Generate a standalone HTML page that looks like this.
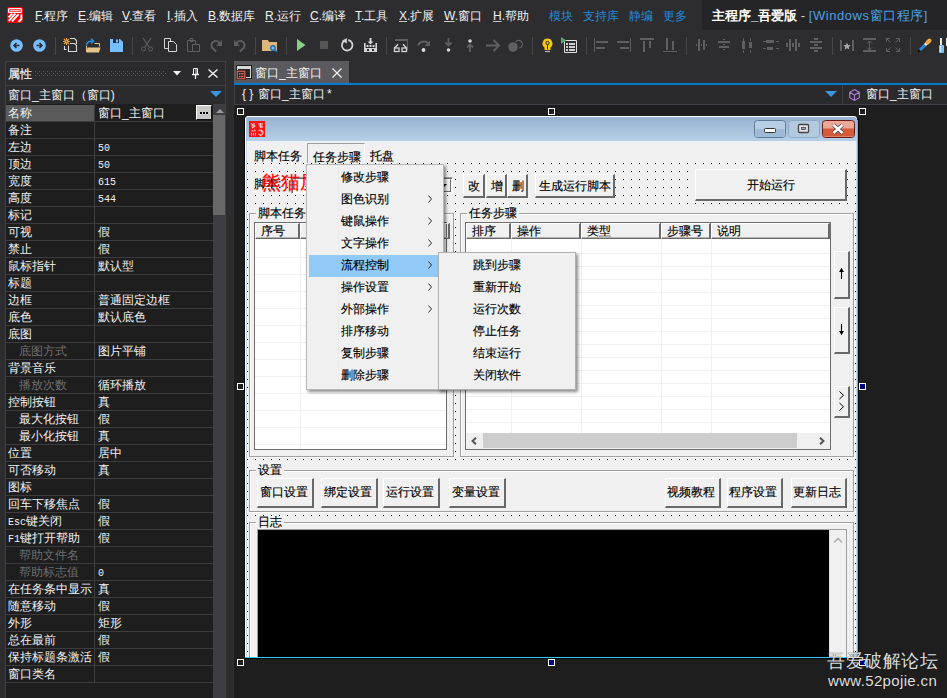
<!DOCTYPE html><html><head><meta charset="utf-8"><style>
*{box-sizing:border-box;margin:0;padding:0}
html,body{width:947px;height:698px;overflow:hidden;background:#2d2d30;font-family:"Liberation Sans",sans-serif;font-size:12px;color:#f1f1f1}
div{position:absolute;white-space:nowrap}
svg{position:absolute;overflow:visible}
.m{font-size:12px;line-height:18px;color:#f1f1f1}
.m u{text-decoration:underline;text-decoration-thickness:1px;text-underline-offset:1px;text-decoration-color:#c8c8c8}
.bl{color:#2489d8}
.pl{color:#f1f1f1;line-height:17px;font-size:12px}
.dis{color:#6d6d6d}
.mo{font-family:"Liberation Mono",monospace;font-size:10px}
.k{color:#000;font-size:12px;line-height:16px;-webkit-text-stroke:0.15px #000}
.btn{background:#f0f0f0;border-style:solid;border-width:1px 2px 2px 1px;border-color:#fff #696969 #696969 #fff;color:#000;text-align:center;font-size:12px}
.hdl{width:8px;height:8px;border:1px solid #fff;background:#1e1e1e}
</style></head><body><div style="left:0px;top:0px;width:947px;height:60px;background:#2d2d30"></div>
<svg style="left:7px;top:7px" width="16" height="16" viewBox="0 0 16 16"><rect width="16" height="16" rx="2" fill="#f00a0a"/><rect x="1.6" y="1.6" width="12.8" height="3.8" rx="1" fill="none" stroke="#fff" stroke-width="1.3"/><path d="M3.2 3.6h9.6" stroke="#fff" stroke-width=".9"/><path d="M5.2 6.6L1.6 10.4M8.4 6.6L1.8 13.8M11.6 7.2L5 14.4M14.4 7.6v4.4l-2.8 2.8" stroke="#fff" stroke-width="1.9" fill="none"/></svg>
<div class="m" style="left:35px;top:7px;"><u>F</u>.程序</div>
<div class="m" style="left:78px;top:7px;"><u>E</u>.编辑</div>
<div class="m" style="left:122px;top:7px;"><u>V</u>.查看</div>
<div class="m" style="left:167px;top:7px;"><u>I</u>.插入</div>
<div class="m" style="left:208px;top:7px;"><u>B</u>.数据库</div>
<div class="m" style="left:265px;top:7px;"><u>R</u>.运行</div>
<div class="m" style="left:310px;top:7px;"><u>C</u>.编译</div>
<div class="m" style="left:355px;top:7px;"><u>T</u>.工具</div>
<div class="m" style="left:399px;top:7px;"><u>X</u>.扩展</div>
<div class="m" style="left:444px;top:7px;"><u>W</u>.窗口</div>
<div class="m" style="left:493px;top:7px;"><u>H</u>.帮助</div>
<div class="m bl" style="left:549px;top:7px;">模块</div>
<div class="m bl" style="left:583px;top:7px;">支持库</div>
<div class="m bl" style="left:629px;top:7px;">静编</div>
<div class="m bl" style="left:663px;top:7px;">更多</div>
<div style="left:702px;top:0px;width:245px;height:30px;background:#252527"></div>
<div class="m" style="left:712px;top:6px;font-size:13px;line-height:20px"><b style="color:#fff">主程序_吾爱版</b> <span style="color:#d0d0d0">-</span> <span style="color:#4aa0e8;letter-spacing:0.55px">[Windows窗口程序]</span></div>
<div style="left:55px;top:37px;width:1px;height:18px;background:#46464a"></div>
<div style="left:132px;top:37px;width:1px;height:18px;background:#46464a"></div>
<div style="left:255px;top:37px;width:1px;height:18px;background:#46464a"></div>
<div style="left:286px;top:37px;width:1px;height:18px;background:#46464a"></div>
<div style="left:386px;top:37px;width:1px;height:18px;background:#46464a"></div>
<div style="left:532px;top:37px;width:1px;height:18px;background:#46464a"></div>
<div style="left:586px;top:37px;width:1px;height:18px;background:#46464a"></div>
<div style="left:686px;top:37px;width:1px;height:18px;background:#46464a"></div>
<div style="left:832px;top:37px;width:1px;height:18px;background:#46464a"></div>
<div style="left:910px;top:37px;width:1px;height:18px;background:#46464a"></div>
<svg style="left:10px;top:39px" width="13" height="13" viewBox="0 0 13 13"><circle cx="6.5" cy="6.5" r="6.3" fill="#75beff"/><path d="M9.5 6.5H4M6.5 4L4 6.5 6.5 9" stroke="#2d2d30" stroke-width="1.6" fill="none"/></svg>
<svg style="left:33px;top:39px" width="13" height="13" viewBox="0 0 13 13"><circle cx="6.5" cy="6.5" r="6.3" fill="#75beff"/><path d="M3.5 6.5H9M6.5 4L9 6.5 6.5 9" stroke="#2d2d30" stroke-width="1.6" fill="none"/></svg>
<svg style="left:63px;top:37px" width="15" height="16" viewBox="0 0 15 16"><g stroke="#e8a040" stroke-width="1.1"><path d="M3.5 1v7M0 4.5h7M1 2l5 5M6 2l-5 5"/></g><circle cx="3.5" cy="4.5" r="1.6" fill="#e8a040"/><circle cx="3.5" cy="4.5" r=".6" fill="#2d2d30"/><path d="M7 1.5h4.5l2 2V7M7 6.5h4.5l2 2v6H5.5V8.5M1.5 9v3.5h2" stroke="#d8d8d8" stroke-width="1.1" fill="none"/></svg>
<svg style="left:85px;top:37px" width="16" height="16" viewBox="0 0 16 16"><path d="M9.5 6.5h5v3" stroke="#e8c48a" stroke-width="1" fill="none"/><path d="M1.5 9v6" stroke="#e8c48a" stroke-width="1"/><path d="M2.5 10.5h13l-1.5 5H1.5z" fill="#e8c48a"/><path d="M1.5 8.5C1.5 5.5 4 4 8 4" stroke="#1e90e0" stroke-width="1.5" fill="none"/><path d="M6 1.5L8.7 4 6 6.5" stroke="#1e90e0" stroke-width="1.5" fill="none"/></svg>
<svg style="left:110px;top:39px" width="13" height="13" viewBox="0 0 13 13"><path d="M0 0h10l3 3v10H0z" fill="#75beff"/><rect x="3" y="0" width="6" height="4" fill="#2d2d30"/><rect x="6" y="0.5" width="2" height="3" fill="#75beff"/></svg>
<svg style="left:141px;top:38px" width="12" height="14" viewBox="0 0 12 14"><path d="M2 0l6 9M10 0L4 9" stroke="#5f5f5f" stroke-width="1.2" fill="none"/><circle cx="2.5" cy="11" r="2" stroke="#5f5f5f" fill="none"/><circle cx="9.5" cy="11" r="2" stroke="#5f5f5f" fill="none"/></svg>
<svg style="left:164px;top:38px" width="14" height="14" viewBox="0 0 14 14"><path d="M0.5 0.5h6v10h-6z" stroke="#d4d4d4" fill="none"/><path d="M4.5 3.5h5l3 3v7h-8z" stroke="#d4d4d4" fill="#2d2d30"/></svg>
<svg style="left:187px;top:38px" width="13" height="14" viewBox="0 0 13 14"><path d="M0.5 2.5h8v11h-8z" stroke="#5f5f5f" fill="none"/><path d="M3 0.5h3v3H3z" stroke="#5f5f5f" fill="none"/><path d="M5.5 6.5h7v7h-7z" stroke="#5f5f5f" fill="#2d2d30"/></svg>
<svg style="left:210px;top:39px" width="13" height="13" viewBox="0 0 13 13"><path d="M6 12.5L2.5 9A4 4 0 0 1 9 3.5L11 5.5" stroke="#5f5f5f" stroke-width="2" fill="none"/><path d="M12 1v6H6z" fill="#5f5f5f"/></svg>
<svg style="left:233px;top:39px" width="13" height="13" viewBox="0 0 13 13"><path d="M7 12.5L10.5 9A4 4 0 0 0 4 3.5L2 5.5" stroke="#5f5f5f" stroke-width="2" fill="none"/><path d="M1 1v6h6z" fill="#5f5f5f"/></svg>
<svg style="left:262px;top:39px" width="16" height="14" viewBox="0 0 16 14"><path d="M0 1h6l1 2h8v9H0z" fill="#dcb67a"/><circle cx="11" cy="9" r="2.2" stroke="#1e6fb8" stroke-width="1.4" fill="#75beff"/><path d="M12.5 10.5l2.5 2.5" stroke="#1e6fb8" stroke-width="1.5"/></svg>
<svg style="left:297px;top:39px" width="9" height="12" viewBox="0 0 9 12"><path d="M0 0l8.5 6L0 12z" fill="#89d185"/></svg>
<svg style="left:320px;top:41px" width="8" height="8" viewBox="0 0 8 8"><rect width="8" height="8" fill="#555"/></svg>
<svg style="left:340px;top:38px" width="14" height="15" viewBox="0 0 14 15"><path d="M4.6 2.6A5.3 5.3 0 1 0 8.2 2" stroke="#d4d4d4" stroke-width="1.8" fill="none"/><path d="M2 2.8L6.8 0v5.4z" fill="#d4d4d4"/></svg>
<svg style="left:363px;top:37px" width="15" height="16" viewBox="0 0 15 16"><path d="M7.5 1v5" stroke="#d4d4d4" stroke-width="2"/><path d="M4.5 4.5h6L7.5 7.5z" fill="#d4d4d4"/><rect x="1" y="6" width="1.6" height="9" fill="#d4d4d4"/><rect x="12.4" y="6" width="1.6" height="9" fill="#d4d4d4"/><rect x="3.5" y="8" width="2" height="2" fill="#d4d4d4"/><rect x="6.5" y="8" width="2" height="2" fill="#d4d4d4"/><rect x="9.5" y="8" width="2" height="2" fill="#d4d4d4"/><rect x="1" y="11" width="13" height="4" fill="#d4d4d4"/><rect x="4" y="12" width="2" height="2" fill="#2d2d30"/><rect x="9" y="12" width="2" height="2" fill="#2d2d30"/></svg>
<svg style="left:393px;top:38px" width="16" height="15" viewBox="0 0 16 15"><rect x="2" y="1" width="13" height="2" fill="#5f5f5f"/><rect x="14" y="3" width="1" height="9" fill="#5f5f5f"/><path d="M1.5 10L5 6.2M13.5 10L10 6.2" stroke="#d4d4d4" stroke-width="1.4" fill="none"/><rect x="1.5" y="10" width="4.5" height="3.5" stroke="#d4d4d4" stroke-width="1.3" fill="none"/><rect x="9" y="10" width="4.5" height="3.5" stroke="#d4d4d4" stroke-width="1.3" fill="none"/></svg>
<svg style="left:417px;top:38px" width="14" height="14" viewBox="0 0 14 14"><path d="M1.2 7.5A5.8 4.8 0 0 1 11.5 5.5" stroke="#5f5f5f" stroke-width="2" fill="none"/><path d="M13 2.5v5.5H7.5z" fill="#5f5f5f"/><circle cx="6.5" cy="12" r="1.9" fill="#dcdcdc"/></svg>
<svg style="left:444px;top:38px" width="9" height="14" viewBox="0 0 9 14"><path d="M4.5 0v7M1.5 4.5L4.5 7.5 7.5 4.5" stroke="#5f5f5f" stroke-width="1.8" fill="none"/><circle cx="4.5" cy="12" r="1.8" fill="#d4d4d4"/></svg>
<svg style="left:466px;top:39px" width="8" height="13" viewBox="0 0 8 13"><circle cx="4" cy="2" r="1.8" fill="#d4d4d4"/><path d="M4 13V6M1 8.5L4 5.5 7 8.5" stroke="#5f5f5f" stroke-width="1.8" fill="none"/></svg>
<svg style="left:486px;top:39px" width="15" height="13" viewBox="0 0 15 13"><path d="M0 6.5h13M7.5 1l5.5 5.5-5.5 5.5" stroke="#5f5f5f" stroke-width="2" fill="none"/></svg>
<svg style="left:508px;top:38px" width="15" height="14" viewBox="0 0 15 14"><circle cx="5" cy="9" r="4.8" fill="#5f5f5f"/><path d="M7.5 4A3.8 3.8 0 1 1 11 10" stroke="#5f5f5f" stroke-width="1.2" fill="none"/></svg>
<svg style="left:542px;top:38px" width="11" height="15" viewBox="0 0 11 15"><path d="M5.5 0.5A5 5 0 0 1 8.5 9.5V12h-6V9.5A5 5 0 0 1 5.5 0.5z" fill="#f5c518"/><circle cx="5.5" cy="5" r="1.6" stroke="#2d2d30" fill="none"/><path d="M5.5 6.5v5" stroke="#2d2d30"/><path d="M3 13.5h5" stroke="#bbb" stroke-width="1.2"/></svg>
<svg style="left:561px;top:37px" width="16" height="16" viewBox="0 0 16 16"><path d="M3.5 3.5h12v12h-12z" stroke="#e0e0e0" fill="#2d2d30"/><rect x="5" y="6" width="2" height="2" fill="#d0d0d0"/><rect x="8" y="6" width="6" height="2" fill="#d0d0d0"/><rect x="5" y="9" width="2" height="2" fill="#d0d0d0"/><rect x="8" y="9" width="6" height="2" fill="#d0d0d0"/><rect x="5" y="12" width="2" height="2" fill="#d0d0d0"/><rect x="8" y="12" width="6" height="2" fill="#d0d0d0"/><path d="M0 0v7l5.5-3.5z" fill="#5aa86b"/></svg>
<svg style="left:590px;top:34px" width="357" height="22"><rect x="4" y="4" width="1" height="14" fill="#5f5f5f"/><rect x="6" y="7" width="12" height="2" fill="#5f5f5f"/><rect x="6" y="13" width="9" height="2" fill="#5f5f5f"/><rect x="40" y="4" width="1" height="14" fill="#5f5f5f"/><rect x="27" y="7" width="12" height="2" fill="#5f5f5f"/><rect x="30" y="13" width="9" height="2" fill="#5f5f5f"/><rect x="50" y="4" width="14" height="2" fill="#5f5f5f"/><rect x="53" y="7" width="2" height="11" fill="#5f5f5f"/><rect x="59" y="7" width="2" height="7" fill="#5f5f5f"/><rect x="73" y="17" width="14" height="1" fill="#5f5f5f"/><rect x="76" y="4" width="2" height="12" fill="#5f5f5f"/><rect x="82" y="7" width="2" height="9" fill="#5f5f5f"/><rect x="108" y="5" width="2" height="12" fill="#5f5f5f"/><rect x="113" y="6" width="2" height="10" fill="#5f5f5f"/><rect x="106" y="10" width="1" height="2" fill="#5f5f5f"/><rect x="111" y="10" width="1" height="2" fill="#5f5f5f"/><rect x="116" y="10" width="1" height="2" fill="#5f5f5f"/><rect x="128" y="7" width="12" height="2" fill="#5f5f5f"/><rect x="129" y="12" width="10" height="2" fill="#5f5f5f"/><rect x="133" y="5" width="2" height="1" fill="#5f5f5f"/><rect x="133" y="10" width="2" height="1" fill="#5f5f5f"/><rect x="133" y="15" width="2" height="1" fill="#5f5f5f"/><rect x="152" y="7" width="3" height="8" fill="#5f5f5f"/><rect x="159" y="8" width="3" height="6" fill="#5f5f5f"/><rect x="153" y="4" width="1" height="3" fill="#5f5f5f"/><rect x="153" y="16" width="1" height="3" fill="#5f5f5f"/><rect x="160" y="4" width="1" height="3" fill="#5f5f5f"/><rect x="160" y="16" width="1" height="3" fill="#5f5f5f"/><rect x="176" y="6" width="8" height="3" fill="#5f5f5f"/><rect x="177" y="13" width="6" height="3" fill="#5f5f5f"/><rect x="173" y="7" width="3" height="1" fill="#5f5f5f"/><rect x="186" y="7" width="3" height="1" fill="#5f5f5f"/><rect x="173" y="14" width="3" height="1" fill="#5f5f5f"/><rect x="186" y="14" width="3" height="1" fill="#5f5f5f"/><rect x="199" y="5" width="2" height="12" fill="#5f5f5f"/><rect x="205" y="5" width="2" height="12" fill="#5f5f5f"/><rect x="196" y="9" width="2" height="4" fill="#5f5f5f"/><rect x="202" y="9" width="2" height="4" fill="#5f5f5f"/><rect x="208" y="9" width="2" height="4" fill="#5f5f5f"/><rect x="220" y="7" width="12" height="2" fill="#5f5f5f"/><rect x="220" y="13" width="12" height="2" fill="#5f5f5f"/><rect x="224" y="4" width="4" height="2" fill="#5f5f5f"/><rect x="224" y="10" width="4" height="2" fill="#5f5f5f"/><rect x="224" y="16" width="4" height="2" fill="#5f5f5f"/><rect x="250" y="6" width="2" height="11" fill="#5f5f5f"/><rect x="262" y="6" width="2" height="11" fill="#5f5f5f"/><rect x="273" y="4" width="13" height="2" fill="#5f5f5f"/><rect x="273" y="16" width="13" height="2" fill="#5f5f5f"/><rect x="279" y="7" width="1" height="9" fill="#5f5f5f"/><path d="M257 8.5l1.1 2.4 2.6.3-1.9 1.8.5 2.6-2.3-1.3-2.3 1.3.5-2.6-1.9-1.8 2.6-.3z" fill="#a8a8a8"/><path d="M277 9.5l2.5-2.5 2.5 2.5M277 13.5l2.5 2.5 2.5-2.5" stroke="#5f5f5f" fill="none"/><path d="M296.5 8V4.5H300M296.5 4.5l4 4M309.5 8V4.5H306M309.5 4.5l-4 4M296.5 14v3.5H300M296.5 17.5l4-4M309.5 14v3.5H306M309.5 17.5l-4-4" stroke="#5f5f5f" fill="none"/></svg>
<svg style="left:917px;top:37px" width="15" height="16" viewBox="0 0 15 16"><path d="M1 15l3-3" stroke="#111" stroke-width="1.6"/><path d="M3 13l5-5" stroke="#2a8ae0" stroke-width="3"/><path d="M8 8l2-2" stroke="#f4f4f4" stroke-width="3"/><path d="M10.5 5.5l2-2" stroke="#f0a848" stroke-width="4" stroke-linecap="round"/></svg>
<svg style="left:938px;top:37px" width="9" height="16" viewBox="0 0 9 16"><rect x="2" y="1" width="2" height="8" fill="#e8e8e8"/><rect x="1" y="8" width="5" height="8" rx="1" fill="#7ac4f4"/><rect x="2" y="9" width="1" height="6" fill="#c8e8ff"/><rect x="8" y="1" width="1" height="8" fill="#e8e8e8"/></svg>
<div style="left:0px;top:60px;width:225px;height:638px;background:#2d2d30"></div>
<div style="left:5px;top:61px;width:221px;height:637px;background:#2b2b2e;border:1px solid #3f3f46"></div>
<div class="pl" style="left:8px;top:64px;line-height:20px;color:#f1f1f1;font-size:12px;-webkit-text-stroke:0.2px #f1f1f1">属性</div>
<svg style="left:35px;top:71px" width="130" height="5" viewBox="0 0 130 5"><rect x="0" y="0" width="1" height="1" fill="#5a5a5e"/><rect x="2" y="2" width="1" height="1" fill="#5a5a5e"/><rect x="0" y="4" width="1" height="1" fill="#5a5a5e"/><rect x="4" y="0" width="1" height="1" fill="#5a5a5e"/><rect x="6" y="2" width="1" height="1" fill="#5a5a5e"/><rect x="4" y="4" width="1" height="1" fill="#5a5a5e"/><rect x="8" y="0" width="1" height="1" fill="#5a5a5e"/><rect x="10" y="2" width="1" height="1" fill="#5a5a5e"/><rect x="8" y="4" width="1" height="1" fill="#5a5a5e"/><rect x="12" y="0" width="1" height="1" fill="#5a5a5e"/><rect x="14" y="2" width="1" height="1" fill="#5a5a5e"/><rect x="12" y="4" width="1" height="1" fill="#5a5a5e"/><rect x="16" y="0" width="1" height="1" fill="#5a5a5e"/><rect x="18" y="2" width="1" height="1" fill="#5a5a5e"/><rect x="16" y="4" width="1" height="1" fill="#5a5a5e"/><rect x="20" y="0" width="1" height="1" fill="#5a5a5e"/><rect x="22" y="2" width="1" height="1" fill="#5a5a5e"/><rect x="20" y="4" width="1" height="1" fill="#5a5a5e"/><rect x="24" y="0" width="1" height="1" fill="#5a5a5e"/><rect x="26" y="2" width="1" height="1" fill="#5a5a5e"/><rect x="24" y="4" width="1" height="1" fill="#5a5a5e"/><rect x="28" y="0" width="1" height="1" fill="#5a5a5e"/><rect x="30" y="2" width="1" height="1" fill="#5a5a5e"/><rect x="28" y="4" width="1" height="1" fill="#5a5a5e"/><rect x="32" y="0" width="1" height="1" fill="#5a5a5e"/><rect x="34" y="2" width="1" height="1" fill="#5a5a5e"/><rect x="32" y="4" width="1" height="1" fill="#5a5a5e"/><rect x="36" y="0" width="1" height="1" fill="#5a5a5e"/><rect x="38" y="2" width="1" height="1" fill="#5a5a5e"/><rect x="36" y="4" width="1" height="1" fill="#5a5a5e"/><rect x="40" y="0" width="1" height="1" fill="#5a5a5e"/><rect x="42" y="2" width="1" height="1" fill="#5a5a5e"/><rect x="40" y="4" width="1" height="1" fill="#5a5a5e"/><rect x="44" y="0" width="1" height="1" fill="#5a5a5e"/><rect x="46" y="2" width="1" height="1" fill="#5a5a5e"/><rect x="44" y="4" width="1" height="1" fill="#5a5a5e"/><rect x="48" y="0" width="1" height="1" fill="#5a5a5e"/><rect x="50" y="2" width="1" height="1" fill="#5a5a5e"/><rect x="48" y="4" width="1" height="1" fill="#5a5a5e"/><rect x="52" y="0" width="1" height="1" fill="#5a5a5e"/><rect x="54" y="2" width="1" height="1" fill="#5a5a5e"/><rect x="52" y="4" width="1" height="1" fill="#5a5a5e"/><rect x="56" y="0" width="1" height="1" fill="#5a5a5e"/><rect x="58" y="2" width="1" height="1" fill="#5a5a5e"/><rect x="56" y="4" width="1" height="1" fill="#5a5a5e"/><rect x="60" y="0" width="1" height="1" fill="#5a5a5e"/><rect x="62" y="2" width="1" height="1" fill="#5a5a5e"/><rect x="60" y="4" width="1" height="1" fill="#5a5a5e"/><rect x="64" y="0" width="1" height="1" fill="#5a5a5e"/><rect x="66" y="2" width="1" height="1" fill="#5a5a5e"/><rect x="64" y="4" width="1" height="1" fill="#5a5a5e"/><rect x="68" y="0" width="1" height="1" fill="#5a5a5e"/><rect x="70" y="2" width="1" height="1" fill="#5a5a5e"/><rect x="68" y="4" width="1" height="1" fill="#5a5a5e"/><rect x="72" y="0" width="1" height="1" fill="#5a5a5e"/><rect x="74" y="2" width="1" height="1" fill="#5a5a5e"/><rect x="72" y="4" width="1" height="1" fill="#5a5a5e"/><rect x="76" y="0" width="1" height="1" fill="#5a5a5e"/><rect x="78" y="2" width="1" height="1" fill="#5a5a5e"/><rect x="76" y="4" width="1" height="1" fill="#5a5a5e"/><rect x="80" y="0" width="1" height="1" fill="#5a5a5e"/><rect x="82" y="2" width="1" height="1" fill="#5a5a5e"/><rect x="80" y="4" width="1" height="1" fill="#5a5a5e"/><rect x="84" y="0" width="1" height="1" fill="#5a5a5e"/><rect x="86" y="2" width="1" height="1" fill="#5a5a5e"/><rect x="84" y="4" width="1" height="1" fill="#5a5a5e"/><rect x="88" y="0" width="1" height="1" fill="#5a5a5e"/><rect x="90" y="2" width="1" height="1" fill="#5a5a5e"/><rect x="88" y="4" width="1" height="1" fill="#5a5a5e"/><rect x="92" y="0" width="1" height="1" fill="#5a5a5e"/><rect x="94" y="2" width="1" height="1" fill="#5a5a5e"/><rect x="92" y="4" width="1" height="1" fill="#5a5a5e"/><rect x="96" y="0" width="1" height="1" fill="#5a5a5e"/><rect x="98" y="2" width="1" height="1" fill="#5a5a5e"/><rect x="96" y="4" width="1" height="1" fill="#5a5a5e"/><rect x="100" y="0" width="1" height="1" fill="#5a5a5e"/><rect x="102" y="2" width="1" height="1" fill="#5a5a5e"/><rect x="100" y="4" width="1" height="1" fill="#5a5a5e"/><rect x="104" y="0" width="1" height="1" fill="#5a5a5e"/><rect x="106" y="2" width="1" height="1" fill="#5a5a5e"/><rect x="104" y="4" width="1" height="1" fill="#5a5a5e"/><rect x="108" y="0" width="1" height="1" fill="#5a5a5e"/><rect x="110" y="2" width="1" height="1" fill="#5a5a5e"/><rect x="108" y="4" width="1" height="1" fill="#5a5a5e"/><rect x="112" y="0" width="1" height="1" fill="#5a5a5e"/><rect x="114" y="2" width="1" height="1" fill="#5a5a5e"/><rect x="112" y="4" width="1" height="1" fill="#5a5a5e"/><rect x="116" y="0" width="1" height="1" fill="#5a5a5e"/><rect x="118" y="2" width="1" height="1" fill="#5a5a5e"/><rect x="116" y="4" width="1" height="1" fill="#5a5a5e"/><rect x="120" y="0" width="1" height="1" fill="#5a5a5e"/><rect x="122" y="2" width="1" height="1" fill="#5a5a5e"/><rect x="120" y="4" width="1" height="1" fill="#5a5a5e"/><rect x="124" y="0" width="1" height="1" fill="#5a5a5e"/><rect x="126" y="2" width="1" height="1" fill="#5a5a5e"/><rect x="124" y="4" width="1" height="1" fill="#5a5a5e"/><rect x="128" y="0" width="1" height="1" fill="#5a5a5e"/><rect x="130" y="2" width="1" height="1" fill="#5a5a5e"/><rect x="128" y="4" width="1" height="1" fill="#5a5a5e"/></svg>
<svg style="left:173px;top:71px" width="8" height="5" viewBox="0 0 8 5"><path d="M0 0h8L4 4.5z" fill="#f1f1f1"/></svg>
<svg style="left:191px;top:68px" width="9" height="11" viewBox="0 0 9 11"><path d="M2.5 0.5h4v6h-4z" stroke="#f1f1f1" fill="none"/><path d="M1 6.5h7M4.5 7v4" stroke="#f1f1f1" stroke-width="1.3"/><path d="M5 1v5" stroke="#f1f1f1"/></svg>
<svg style="left:208px;top:69px" width="10" height="9" viewBox="0 0 10 9"><path d="M0.5 0.5l9 8M9.5 0.5l-9 8" stroke="#f1f1f1" stroke-width="1.4"/></svg>
<div style="left:6px;top:85px;width:219px;height:1px;background:#3f3f46"></div>
<div class="pl" style="left:8px;top:86px;line-height:18px;color:#f1f1f1">窗口_主窗口（窗口)</div>
<svg style="left:210px;top:91px" width="12" height="6" viewBox="0 0 12 6"><path d="M0 0h12L6 6z" fill="#3a96dd"/></svg>
<div style="left:6px;top:104px;width:219px;height:1px;background:#3f3f46"></div>
<div style="left:6px;top:104px;width:207px;height:594px;background:#1e1e1e"></div>
<div style="left:6px;top:105px;width:88px;height:16px;background:#5a5a5a"></div>
<div class="pl" style="left:8px;top:105px;color:#f1f1f1">名称</div>
<div class="pl" style="left:98px;top:105px;">窗口_主窗口</div>
<div style="left:6px;top:121px;width:207px;height:1px;background:#3c3c3e"></div>
<div class="pl" style="left:8px;top:122px;color:#f1f1f1">备注</div>
<div class="pl" style="left:98px;top:122px;"></div>
<div style="left:6px;top:138px;width:207px;height:1px;background:#3c3c3e"></div>
<div class="pl" style="left:8px;top:139px;color:#f1f1f1">左边</div>
<div class="pl" style="left:98px;top:139px;"><span class=mo>50</span></div>
<div style="left:6px;top:155px;width:207px;height:1px;background:#3c3c3e"></div>
<div class="pl" style="left:8px;top:156px;color:#f1f1f1">顶边</div>
<div class="pl" style="left:98px;top:156px;"><span class=mo>50</span></div>
<div style="left:6px;top:172px;width:207px;height:1px;background:#3c3c3e"></div>
<div class="pl" style="left:8px;top:173px;color:#f1f1f1">宽度</div>
<div class="pl" style="left:98px;top:173px;"><span class=mo>615</span></div>
<div style="left:6px;top:189px;width:207px;height:1px;background:#3c3c3e"></div>
<div class="pl" style="left:8px;top:190px;color:#f1f1f1">高度</div>
<div class="pl" style="left:98px;top:190px;"><span class=mo>544</span></div>
<div style="left:6px;top:206px;width:207px;height:1px;background:#3c3c3e"></div>
<div class="pl" style="left:8px;top:207px;color:#f1f1f1">标记</div>
<div class="pl" style="left:98px;top:207px;"></div>
<div style="left:6px;top:223px;width:207px;height:1px;background:#3c3c3e"></div>
<div class="pl" style="left:8px;top:224px;color:#f1f1f1">可视</div>
<div class="pl" style="left:98px;top:224px;">假</div>
<div style="left:6px;top:240px;width:207px;height:1px;background:#3c3c3e"></div>
<div class="pl" style="left:8px;top:241px;color:#f1f1f1">禁止</div>
<div class="pl" style="left:98px;top:241px;">假</div>
<div style="left:6px;top:257px;width:207px;height:1px;background:#3c3c3e"></div>
<div class="pl" style="left:8px;top:258px;color:#f1f1f1">鼠标指针</div>
<div class="pl" style="left:98px;top:258px;">默认型</div>
<div style="left:6px;top:274px;width:207px;height:1px;background:#3c3c3e"></div>
<div class="pl" style="left:8px;top:275px;color:#f1f1f1">标题</div>
<div class="pl" style="left:98px;top:275px;"></div>
<div style="left:6px;top:291px;width:207px;height:1px;background:#3c3c3e"></div>
<div class="pl" style="left:8px;top:292px;color:#f1f1f1">边框</div>
<div class="pl" style="left:98px;top:292px;">普通固定边框</div>
<div style="left:6px;top:308px;width:207px;height:1px;background:#3c3c3e"></div>
<div class="pl" style="left:8px;top:309px;color:#f1f1f1">底色</div>
<div class="pl" style="left:98px;top:309px;">默认底色</div>
<div style="left:6px;top:325px;width:207px;height:1px;background:#3c3c3e"></div>
<div class="pl" style="left:8px;top:326px;color:#f1f1f1">底图</div>
<div class="pl" style="left:98px;top:326px;"></div>
<div style="left:6px;top:342px;width:207px;height:1px;background:#3c3c3e"></div>
<div class="pl" style="left:19px;top:343px;color:#6d6d6d">底图方式</div>
<div class="pl" style="left:98px;top:343px;">图片平铺</div>
<div style="left:6px;top:359px;width:207px;height:1px;background:#3c3c3e"></div>
<div class="pl" style="left:8px;top:360px;color:#f1f1f1">背景音乐</div>
<div class="pl" style="left:98px;top:360px;"></div>
<div style="left:6px;top:376px;width:207px;height:1px;background:#3c3c3e"></div>
<div class="pl" style="left:19px;top:377px;color:#6d6d6d">播放次数</div>
<div class="pl" style="left:98px;top:377px;">循环播放</div>
<div style="left:6px;top:393px;width:207px;height:1px;background:#3c3c3e"></div>
<div class="pl" style="left:8px;top:394px;color:#f1f1f1">控制按钮</div>
<div class="pl" style="left:98px;top:394px;">真</div>
<div style="left:6px;top:410px;width:207px;height:1px;background:#3c3c3e"></div>
<div class="pl" style="left:19px;top:411px;color:#f1f1f1">最大化按钮</div>
<div class="pl" style="left:98px;top:411px;">假</div>
<div style="left:6px;top:427px;width:207px;height:1px;background:#3c3c3e"></div>
<div class="pl" style="left:19px;top:428px;color:#f1f1f1">最小化按钮</div>
<div class="pl" style="left:98px;top:428px;">真</div>
<div style="left:6px;top:444px;width:207px;height:1px;background:#3c3c3e"></div>
<div class="pl" style="left:8px;top:445px;color:#f1f1f1">位置</div>
<div class="pl" style="left:98px;top:445px;">居中</div>
<div style="left:6px;top:461px;width:207px;height:1px;background:#3c3c3e"></div>
<div class="pl" style="left:8px;top:462px;color:#f1f1f1">可否移动</div>
<div class="pl" style="left:98px;top:462px;">真</div>
<div style="left:6px;top:478px;width:207px;height:1px;background:#3c3c3e"></div>
<div class="pl" style="left:8px;top:479px;color:#f1f1f1">图标</div>
<div class="pl" style="left:98px;top:479px;"></div>
<div style="left:6px;top:495px;width:207px;height:1px;background:#3c3c3e"></div>
<div class="pl" style="left:8px;top:496px;color:#f1f1f1">回车下移焦点</div>
<div class="pl" style="left:98px;top:496px;">假</div>
<div style="left:6px;top:512px;width:207px;height:1px;background:#3c3c3e"></div>
<div class="pl" style="left:8px;top:513px;color:#f1f1f1"><span class=mo>Esc</span>键关闭</div>
<div class="pl" style="left:98px;top:513px;">假</div>
<div style="left:6px;top:529px;width:207px;height:1px;background:#3c3c3e"></div>
<div class="pl" style="left:8px;top:530px;color:#f1f1f1"><span class=mo>F1</span>键打开帮助</div>
<div class="pl" style="left:98px;top:530px;">假</div>
<div style="left:6px;top:546px;width:207px;height:1px;background:#3c3c3e"></div>
<div class="pl" style="left:19px;top:547px;color:#6d6d6d">帮助文件名</div>
<div class="pl" style="left:98px;top:547px;"></div>
<div style="left:6px;top:563px;width:207px;height:1px;background:#3c3c3e"></div>
<div class="pl" style="left:19px;top:564px;color:#6d6d6d">帮助标志值</div>
<div class="pl" style="left:98px;top:564px;"><span class=mo>0</span></div>
<div style="left:6px;top:580px;width:207px;height:1px;background:#3c3c3e"></div>
<div class="pl" style="left:8px;top:581px;color:#f1f1f1">在任务条中显示</div>
<div class="pl" style="left:98px;top:581px;">真</div>
<div style="left:6px;top:597px;width:207px;height:1px;background:#3c3c3e"></div>
<div class="pl" style="left:8px;top:598px;color:#f1f1f1">随意移动</div>
<div class="pl" style="left:98px;top:598px;">假</div>
<div style="left:6px;top:614px;width:207px;height:1px;background:#3c3c3e"></div>
<div class="pl" style="left:8px;top:615px;color:#f1f1f1">外形</div>
<div class="pl" style="left:98px;top:615px;">矩形</div>
<div style="left:6px;top:631px;width:207px;height:1px;background:#3c3c3e"></div>
<div class="pl" style="left:8px;top:632px;color:#f1f1f1">总在最前</div>
<div class="pl" style="left:98px;top:632px;">假</div>
<div style="left:6px;top:648px;width:207px;height:1px;background:#3c3c3e"></div>
<div class="pl" style="left:8px;top:649px;color:#f1f1f1">保持标题条激活</div>
<div class="pl" style="left:98px;top:649px;">假</div>
<div style="left:6px;top:665px;width:207px;height:1px;background:#3c3c3e"></div>
<div class="pl" style="left:8px;top:666px;color:#f1f1f1">窗口类名</div>
<div class="pl" style="left:98px;top:666px;"></div>
<div style="left:6px;top:682px;width:207px;height:1px;background:#3c3c3e"></div>
<div style="left:94px;top:104px;width:1px;height:578px;background:#3c3c3e"></div>
<div style="left:196px;top:105px;width:16px;height:15px;background:#c8c8c4;border-top:1px solid #fff;border-left:1px solid #fff;border-right:1px solid #111;border-bottom:1px solid #111"></div>
<svg style="left:200px;top:112px" width="8" height="2" viewBox="0 0 8 2"><rect x="0" width="2" height="2" fill="#000"/><rect x="3" width="2" height="2" fill="#000"/><rect x="6" width="2" height="2" fill="#000"/></svg>
<div style="left:213px;top:104px;width:12px;height:594px;background:#3e3e42"></div>
<svg style="left:216px;top:109px" width="8" height="4" viewBox="0 0 8 4"><path d="M0 4L4 0l4 4z" fill="#9a9a9a"/></svg>
<div style="left:213px;top:115px;width:12px;height:100px;background:#686868"></div>
<div style="left:226px;top:60px;width:8px;height:638px;background:#2d2d30"></div>
<div style="left:234px;top:61px;width:713px;height:24px;background:#2d2d30"></div>
<div style="left:234px;top:61px;width:115px;height:22px;background:#5a5a5e"></div>
<svg style="left:236px;top:65px" width="16" height="15" viewBox="0 0 16 15"><rect x="0" y="0" width="16" height="14" fill="#1e1e1e"/><rect x="1.5" y="1.5" width="13" height="11" fill="#262626" stroke="#d8d8d8"/><rect x="1" y="1" width="14" height="3" fill="#d8d8d8"/><rect x="0" y="5" width="10" height="10" fill="#1e1e1e"/><rect x="1.2" y="6.2" width="7.6" height="7.6" fill="#262626" stroke="#f06a5a" stroke-width="1.1"/><rect x="3" y="8" width="1.5" height="1.5" fill="#f06a5a"/><rect x="3" y="10.8" width="1.5" height="1.5" fill="#f06a5a"/><rect x="5.2" y="8" width="2.3" height="1.4" fill="#f06a5a"/><rect x="5.2" y="10.8" width="2.3" height="1.4" fill="#f06a5a"/></svg>
<div class="pl" style="left:255px;top:64px;line-height:18px;color:#f1f1f1">窗口_主窗口</div>
<svg style="left:332px;top:68px" width="10" height="10" viewBox="0 0 10 10"><path d="M0.5 0.5l9 9M9.5 0.5l-9 9" stroke="#f1f1f1" stroke-width="1.3"/></svg>
<div style="left:234px;top:83px;width:713px;height:2px;background:#007acc"></div>
<div style="left:234px;top:85px;width:713px;height:20px;background:#2a2a2d;border-bottom:1px solid #3f3f46;border-left:1px solid #3f3f46"></div>
<div class="pl" style="left:242px;top:85px;line-height:18px;color:#f1f1f1">{ }</div>
<div class="pl" style="left:258px;top:85px;line-height:18px;color:#f1f1f1">窗口_主窗口</div>
<div class="pl" style="left:327px;top:85px;line-height:18px;color:#f1f1f1">*</div>
<svg style="left:825px;top:91px" width="12" height="6" viewBox="0 0 12 6"><path d="M0 0h12L6 6z" fill="#3a96dd"/></svg>
<div style="left:842px;top:85px;width:1px;height:19px;background:#3f3f46"></div>
<svg style="left:849px;top:89px" width="11" height="12" viewBox="0 0 11 12"><path d="M5.5 0.6l4.8 2.7v5.4l-4.8 2.7-4.8-2.7V3.3z M0.7 3.3l4.8 2.7 4.8-2.7M5.5 6v5.4" stroke="#b180d7" stroke-width="1.1" fill="none"/></svg>
<div class="pl" style="left:866px;top:85px;line-height:18px;color:#f1f1f1">窗口_主窗口</div>
<div style="left:234px;top:105px;width:713px;height:593px;background:#1e1e1e"></div>
<div style="left:237px;top:108px;width:7px;height:7px;background:#1e1e1e;border:1px solid #fff"></div>
<div style="left:548px;top:108px;width:7px;height:7px;background:#1e1e1e;border:1px solid #fff"></div>
<div style="left:859px;top:108px;width:7px;height:7px;background:#1e1e1e;border:1px solid #fff"></div>
<div style="left:237px;top:383px;width:7px;height:7px;background:#1e1e1e;border:1px solid #fff"></div>
<div style="left:859px;top:383px;width:7px;height:7px;background:#000080;border:1px solid #fff"></div>
<div style="left:245px;top:116px;width:612px;height:541px;background:#f0f0f0;border-top-left-radius:4px;border-top-right-radius:4px"></div>
<div style="left:245px;top:116px;width:612px;height:25px;background:linear-gradient(#97b2d0,#b7d0e8);border-top:1px solid #fff;border-left:1px solid #fff;border-top-left-radius:4px;border-top-right-radius:4px"></div>
<div style="left:246px;top:117px;width:1px;height:24px;background:#a8c2dc"></div>
<svg style="left:249px;top:121px" width="16" height="16" viewBox="0 0 16 16"><rect width="16" height="16" fill="#fa1414"/><g stroke="#fbd0d0" stroke-width="1.1" fill="none"><path d="M2 2.5l2 1.5M2.5 5h4M3 7l3-2M5 2v3"/><path d="M9 3h5M10 5h3v2M11.5 2v5"/><path d="M2.5 9.5l2 1M5 9l1.5 1M2.5 12v2.5M4.5 12v2.5M6.5 12v2.5"/><path d="M9.5 10a2.5 2.5 0 1 1 0 3M10.5 13.5l2 1.5M12.5 9.5v2"/></g></svg>
<svg style="left:754px;top:120px" width="32" height="18" viewBox="0 0 32 18"><rect x="0.5" y="0.5" width="31" height="17" rx="3" fill="#b7cde3" stroke="#5f7a98"/><rect x="1.5" y="9" width="29" height="8" fill="#9fbad6"/><rect x="10.5" y="8.5" width="11" height="4" rx="1" fill="#fff" stroke="#333"/></svg>
<svg style="left:788px;top:120px" width="32" height="18" viewBox="0 0 32 18"><rect x="0.5" y="0.5" width="31" height="17" rx="3" fill="#b2c9df" stroke="#8fa9c4"/><rect x="10.5" y="4.5" width="10" height="8" rx="1" fill="#e8e4ea" stroke="#444" stroke-width="1.3"/><rect x="13.5" y="7.5" width="4" height="2" fill="#8fa9c4" stroke="#444" stroke-width=".8"/></svg>
<svg style="left:822px;top:120px" width="33" height="18" viewBox="0 0 33 18"><rect x="0.5" y="0.5" width="32" height="17" rx="3" fill="#eba898" stroke="#6b1a1a"/><rect x="1" y="8.5" width="31" height="8" fill="#d45a3a"/><path d="M11.5 5l9 8M20.5 5l-9 8" stroke="#444" stroke-width="3.8"/><path d="M11.5 5l9 8M20.5 5l-9 8" stroke="#fff" stroke-width="2.4"/></svg>
<div style="left:245px;top:141px;width:1px;height:516px;background:#fff"></div>
<div style="left:246px;top:141px;width:1px;height:516px;background:#c8dcf0"></div>
<div style="left:856px;top:141px;width:1px;height:516px;background:#c8dcf0"></div>
<svg style="left:247px;top:163px" width="609" height="494"><defs><pattern id="dg" x="0" y="0" width="8" height="8" patternUnits="userSpaceOnUse"><rect x="0" y="0" width="1" height="1" fill="#000"/></pattern></defs><rect width="609" height="494" fill="url(#dg)"/></svg>
<div class="k" style="left:254px;top:148px;">脚本任务</div>
<div style="left:307px;top:143px;width:58px;height:20px;border-top:1px solid #a0a0a0;border-left:1px solid #a0a0a0;border-right:1px solid #fff;background:#f0f0f0"></div>
<div class="k" style="left:313px;top:149px;">任务步骤</div>
<div class="k" style="left:370px;top:148px;">托盘</div>
<div class="k" style="left:254px;top:176px;">脚本:</div>
<div style="left:291px;top:177px;width:162px;height:17px;background:#fff;border:1px solid;border-color:#a0a0a0 #fff #fff #a0a0a0;box-shadow:inset 1px 1px 0 #696969"></div>
<div style="left:436px;top:179px;width:15px;height:13px;background:#f0f0f0;border:1px solid;border-color:#fff #696969 #696969 #fff"></div>
<svg style="left:441px;top:184px" width="6" height="3" viewBox="0 0 6 3"><path d="M0 0h6L3 3z" fill="#000"/></svg>
<div style="left:262px;top:172px;font-family:'Liberation Serif',serif;font-size:19px;line-height:22px;color:#f00;-webkit-text-stroke:0.2px #f00">熊猫屋</div>
<div class="btn" style="left:463px;top:174px;width:22px;height:24px;"></div>
<div class="k" style="left:463px;top:178px;width:22px;text-align:center">改</div>
<div class="btn" style="left:486px;top:174px;width:21px;height:24px;"></div>
<div class="k" style="left:486px;top:178px;width:21px;text-align:center">增</div>
<div class="btn" style="left:507px;top:174px;width:21px;height:24px;"></div>
<div class="k" style="left:507px;top:178px;width:21px;text-align:center">删</div>
<div class="btn" style="left:535px;top:174px;width:80px;height:24px;"></div>
<div class="k" style="left:535px;top:178px;width:80px;text-align:center">生成运行脚本</div>
<div class="btn" style="left:695px;top:169px;width:152px;height:32px;"></div>
<div class="k" style="left:695px;top:177px;width:152px;text-align:center">开始运行</div>
<div style="left:249px;top:207px;width:206px;height:251px;background:#f0f0f0"></div>
<div style="left:250px;top:214px;width:205px;height:244px;border:1px solid #fff"></div>
<div style="left:249px;top:213px;width:205px;height:244px;border:1px solid #a0a0a0"></div>
<div style="left:256px;top:212px;width:52px;height:4px;background:#f0f0f0"></div>
<div class="k" style="left:258px;top:205px">脚本任务</div>
<div style="left:460px;top:207px;width:395px;height:251px;background:#f0f0f0"></div>
<div style="left:461px;top:214px;width:394px;height:244px;border:1px solid #fff"></div>
<div style="left:460px;top:213px;width:394px;height:244px;border:1px solid #a0a0a0"></div>
<div style="left:467px;top:212px;width:52px;height:4px;background:#f0f0f0"></div>
<div class="k" style="left:469px;top:205px">任务步骤</div>
<div style="left:254px;top:222px;width:193px;height:228px;background:#fff;border:1px solid #6e6e6e"></div>
<div style="left:255px;top:223px;width:191px;height:16px;background:#f0f0f0"></div>
<div style="left:255px;top:223px;width:45px;height:16px;border-style:solid;border-width:1px 2px 1px 1px;border-color:#fff #696969 #696969 #fff;box-shadow:inset 0 -1px 0 #b4b4b4"></div>
<div class="k" style="left:261px;top:223px">序号</div>
<div style="left:300px;top:223px;width:150px;height:16px;border-style:solid;border-width:1px 2px 1px 1px;border-color:#fff #696969 #696969 #fff;box-shadow:inset 0 -1px 0 #b4b4b4"></div>
<div class="k" style="left:306px;top:223px"></div>
<div style="left:255px;top:257px;width:191px;height:1px;background:#f0f0f0"></div>
<div style="left:255px;top:274px;width:191px;height:1px;background:#f0f0f0"></div>
<div style="left:255px;top:291px;width:191px;height:1px;background:#f0f0f0"></div>
<div style="left:255px;top:308px;width:191px;height:1px;background:#f0f0f0"></div>
<div style="left:255px;top:325px;width:191px;height:1px;background:#f0f0f0"></div>
<div style="left:255px;top:342px;width:191px;height:1px;background:#f0f0f0"></div>
<div style="left:255px;top:359px;width:191px;height:1px;background:#f0f0f0"></div>
<div style="left:255px;top:376px;width:191px;height:1px;background:#f0f0f0"></div>
<div style="left:255px;top:393px;width:191px;height:1px;background:#f0f0f0"></div>
<div style="left:255px;top:410px;width:191px;height:1px;background:#f0f0f0"></div>
<div style="left:255px;top:427px;width:191px;height:1px;background:#f0f0f0"></div>
<div style="left:255px;top:444px;width:191px;height:1px;background:#f0f0f0"></div>
<div style="left:300px;top:239px;width:1px;height:210px;background:#f0f0f0"></div>
<div style="left:465px;top:222px;width:366px;height:228px;background:#fff;border:1px solid #6e6e6e"></div>
<div style="left:466px;top:223px;width:364px;height:16px;background:#f0f0f0"></div>
<div style="left:466px;top:223px;width:45px;height:16px;border-style:solid;border-width:1px 2px 1px 1px;border-color:#fff #696969 #696969 #fff;box-shadow:inset 0 -1px 0 #b4b4b4"></div>
<div class="k" style="left:472px;top:223px">排序</div>
<div style="left:511px;top:223px;width:70px;height:16px;border-style:solid;border-width:1px 2px 1px 1px;border-color:#fff #696969 #696969 #fff;box-shadow:inset 0 -1px 0 #b4b4b4"></div>
<div class="k" style="left:517px;top:223px">操作</div>
<div style="left:581px;top:223px;width:80px;height:16px;border-style:solid;border-width:1px 2px 1px 1px;border-color:#fff #696969 #696969 #fff;box-shadow:inset 0 -1px 0 #b4b4b4"></div>
<div class="k" style="left:587px;top:223px">类型</div>
<div style="left:661px;top:223px;width:50px;height:16px;border-style:solid;border-width:1px 2px 1px 1px;border-color:#fff #696969 #696969 #fff;box-shadow:inset 0 -1px 0 #b4b4b4"></div>
<div class="k" style="left:667px;top:223px">步骤号</div>
<div style="left:711px;top:223px;width:119px;height:16px;border-style:solid;border-width:1px 2px 1px 1px;border-color:#fff #696969 #696969 #fff;box-shadow:inset 0 -1px 0 #b4b4b4"></div>
<div class="k" style="left:717px;top:223px">说明</div>
<div style="left:466px;top:253px;width:364px;height:1px;background:#f0f0f0"></div>
<div style="left:466px;top:266px;width:364px;height:1px;background:#f0f0f0"></div>
<div style="left:466px;top:279px;width:364px;height:1px;background:#f0f0f0"></div>
<div style="left:466px;top:292px;width:364px;height:1px;background:#f0f0f0"></div>
<div style="left:466px;top:305px;width:364px;height:1px;background:#f0f0f0"></div>
<div style="left:466px;top:318px;width:364px;height:1px;background:#f0f0f0"></div>
<div style="left:466px;top:331px;width:364px;height:1px;background:#f0f0f0"></div>
<div style="left:466px;top:344px;width:364px;height:1px;background:#f0f0f0"></div>
<div style="left:466px;top:357px;width:364px;height:1px;background:#f0f0f0"></div>
<div style="left:466px;top:370px;width:364px;height:1px;background:#f0f0f0"></div>
<div style="left:466px;top:383px;width:364px;height:1px;background:#f0f0f0"></div>
<div style="left:466px;top:396px;width:364px;height:1px;background:#f0f0f0"></div>
<div style="left:466px;top:409px;width:364px;height:1px;background:#f0f0f0"></div>
<div style="left:466px;top:422px;width:364px;height:1px;background:#f0f0f0"></div>
<div style="left:511px;top:239px;width:1px;height:194px;background:#f0f0f0"></div>
<div style="left:581px;top:239px;width:1px;height:194px;background:#f0f0f0"></div>
<div style="left:661px;top:239px;width:1px;height:194px;background:#f0f0f0"></div>
<div style="left:711px;top:239px;width:1px;height:194px;background:#f0f0f0"></div>
<div style="left:466px;top:433px;width:364px;height:16px;background:#f0f0f0"></div>
<div style="left:483px;top:433px;width:314px;height:15px;background:#cdcdcd"></div>
<svg style="left:471px;top:437px" width="6" height="8" viewBox="0 0 6 8"><path d="M5 0.7L1.5 4 5 7.3" stroke="#555" stroke-width="2" fill="none"/></svg>
<svg style="left:819px;top:437px" width="6" height="8" viewBox="0 0 6 8"><path d="M1 0.7L4.5 4 1 7.3" stroke="#555" stroke-width="2" fill="none"/></svg>
<div class="btn" style="left:834px;top:251px;width:16px;height:48px;"></div>
<div class="k" style="left:834px;top:267px;width:16px;text-align:center"></div>
<svg style="left:838px;top:267px" width="7" height="13" viewBox="0 0 7 13"><path d="M3.5 12V1.5" stroke="#000" stroke-width="1.1"/><path d="M1 5l2.5-4L6 5z" fill="#000"/></svg>
<div class="btn" style="left:834px;top:307px;width:16px;height:47px;"></div>
<div class="k" style="left:834px;top:322px;width:16px;text-align:center"></div>
<svg style="left:838px;top:324px" width="7" height="13" viewBox="0 0 7 13"><path d="M3.5 0v10.5" stroke="#000" stroke-width="1.1"/><path d="M1 7l2.5 4L6 7z" fill="#000"/></svg>
<div class="btn" style="left:834px;top:386px;width:16px;height:32px;"></div>
<div class="k" style="left:834px;top:394px;width:16px;text-align:center"></div>
<svg style="left:839px;top:391px" width="6" height="21" viewBox="0 0 6 21"><path d="M0.5 0.5L4.5 4.25 .5 8M0.5 12L4.5 15.75 .5 19.5" stroke="#000" stroke-width="1" fill="none"/></svg>
<div style="left:249px;top:464px;width:606px;height:49px;background:#f0f0f0"></div>
<div style="left:250px;top:471px;width:605px;height:42px;border:1px solid #fff"></div>
<div style="left:249px;top:470px;width:605px;height:42px;border:1px solid #a0a0a0"></div>
<div style="left:256px;top:469px;width:28px;height:4px;background:#f0f0f0"></div>
<div class="k" style="left:258px;top:462px">设置</div>
<div class="btn" style="left:257px;top:478px;width:57px;height:30px;"></div>
<div class="k" style="left:255px;top:484px;width:57px;text-align:center">窗口设置</div>
<div class="btn" style="left:321px;top:478px;width:57px;height:30px;"></div>
<div class="k" style="left:319px;top:484px;width:57px;text-align:center">绑定设置</div>
<div class="btn" style="left:383px;top:478px;width:57px;height:30px;"></div>
<div class="k" style="left:381px;top:484px;width:57px;text-align:center">运行设置</div>
<div class="btn" style="left:449px;top:478px;width:57px;height:30px;"></div>
<div class="k" style="left:447px;top:484px;width:57px;text-align:center">变量设置</div>
<div class="btn" style="left:665px;top:478px;width:56px;height:30px;"></div>
<div class="k" style="left:663px;top:484px;width:56px;text-align:center">视频教程</div>
<div class="btn" style="left:727px;top:478px;width:56px;height:30px;"></div>
<div class="k" style="left:725px;top:484px;width:56px;text-align:center">程序设置</div>
<div class="btn" style="left:791px;top:478px;width:56px;height:30px;"></div>
<div class="k" style="left:789px;top:484px;width:56px;text-align:center">更新日志</div>
<div style="left:249px;top:516px;width:606px;height:207px;background:#f0f0f0"></div>
<div style="left:250px;top:523px;width:605px;height:200px;border:1px solid #fff"></div>
<div style="left:249px;top:522px;width:605px;height:200px;border:1px solid #a0a0a0"></div>
<div style="left:256px;top:521px;width:28px;height:4px;background:#f0f0f0"></div>
<div class="k" style="left:258px;top:514px">日志</div>
<div style="left:257px;top:529px;width:590px;height:140px;background:#000;border:1px solid #a0a0a0"></div>
<div style="left:829px;top:530px;width:17px;height:140px;background:#f0f0f0;border-left:1px solid #e0e0e0"></div>
<svg style="left:833px;top:537px" width="10" height="6" viewBox="0 0 10 6"><path d="M1 5.5L5 1.5l4 4" stroke="#b0b0b0" stroke-width="1.6" fill="none"/></svg>
<div style="left:234px;top:658px;width:713px;height:40px;background:#1e1e1e"></div>
<div style="left:857px;top:120px;width:1px;height:538px;background:#3cc8f0"></div>
<div style="left:245px;top:657px;width:613px;height:1px;background:#3cc8f0"></div>
<div style="left:244px;top:118px;width:1px;height:541px;background:#050505"></div>
<div style="left:858px;top:118px;width:1px;height:541px;background:#050505"></div>
<div style="left:244px;top:658px;width:615px;height:1px;background:#050505"></div>
<div style="left:237px;top:659px;width:7px;height:7px;background:#1e1e1e;border:1px solid #fff"></div>
<div style="left:548px;top:659px;width:7px;height:7px;background:#000080;border:1px solid #fff"></div>
<div style="left:859px;top:659px;width:7px;height:7px;background:#000080;border:1px solid #fff"></div>
<div style="left:306px;top:164px;width:138px;height:226px;background:#f0f0f0;border:1px solid #b8b8b8;box-shadow:2px 2px 3px rgba(0,0,0,.45)"></div>
<div style="left:338px;top:166px;width:1px;height:222px;background:#ebebeb"></div>
<div class="k" style="left:341px;top:169px;">修改步骤</div>
<div class="k" style="left:341px;top:191px;">图色识别</div>
<svg style="left:428px;top:195px" width="4" height="8" viewBox="0 0 4 8"><path d="M0.5 0.5L3.5 4 .5 7.5" stroke="#333" stroke-width="1" fill="none"/></svg>
<div class="k" style="left:341px;top:213px;">键鼠操作</div>
<svg style="left:428px;top:217px" width="4" height="8" viewBox="0 0 4 8"><path d="M0.5 0.5L3.5 4 .5 7.5" stroke="#333" stroke-width="1" fill="none"/></svg>
<div class="k" style="left:341px;top:235px;">文字操作</div>
<svg style="left:428px;top:239px" width="4" height="8" viewBox="0 0 4 8"><path d="M0.5 0.5L3.5 4 .5 7.5" stroke="#333" stroke-width="1" fill="none"/></svg>
<div style="left:309px;top:255px;width:130px;height:22px;background:#91c9f7"></div>
<div class="k" style="left:341px;top:257px;">流程控制</div>
<svg style="left:428px;top:261px" width="4" height="8" viewBox="0 0 4 8"><path d="M0.5 0.5L3.5 4 .5 7.5" stroke="#333" stroke-width="1" fill="none"/></svg>
<div class="k" style="left:341px;top:279px;">操作设置</div>
<svg style="left:428px;top:283px" width="4" height="8" viewBox="0 0 4 8"><path d="M0.5 0.5L3.5 4 .5 7.5" stroke="#333" stroke-width="1" fill="none"/></svg>
<div class="k" style="left:341px;top:301px;">外部操作</div>
<svg style="left:428px;top:305px" width="4" height="8" viewBox="0 0 4 8"><path d="M0.5 0.5L3.5 4 .5 7.5" stroke="#333" stroke-width="1" fill="none"/></svg>
<div class="k" style="left:341px;top:323px;">排序移动</div>
<div class="k" style="left:341px;top:345px;">复制步骤</div>
<div class="k" style="left:341px;top:367px;">删除步骤</div>
<div style="left:438px;top:252px;width:138px;height:138px;background:#f0f0f0;border:1px solid #b0b0b0;box-shadow:2px 2px 3px rgba(0,0,0,.45)"></div>
<div class="k" style="left:473px;top:257px;">跳到步骤</div>
<div class="k" style="left:473px;top:279px;">重新开始</div>
<div class="k" style="left:473px;top:301px;">运行次数</div>
<div class="k" style="left:473px;top:323px;">停止任务</div>
<div class="k" style="left:473px;top:345px;">结束运行</div>
<div class="k" style="left:473px;top:367px;">关闭软件</div>
<div style="left:827px;top:650px;font-size:18px;letter-spacing:0.5px;line-height:22px;color:#e0e0e0;text-shadow:0 0 1px #000">吾爱破解论坛</div>
<div style="left:828px;top:672px;font-size:15px;line-height:18px;color:#e0e0e0;letter-spacing:0.35px;text-shadow:0 0 1px #000">www.52pojie.cn</div></body></html>
